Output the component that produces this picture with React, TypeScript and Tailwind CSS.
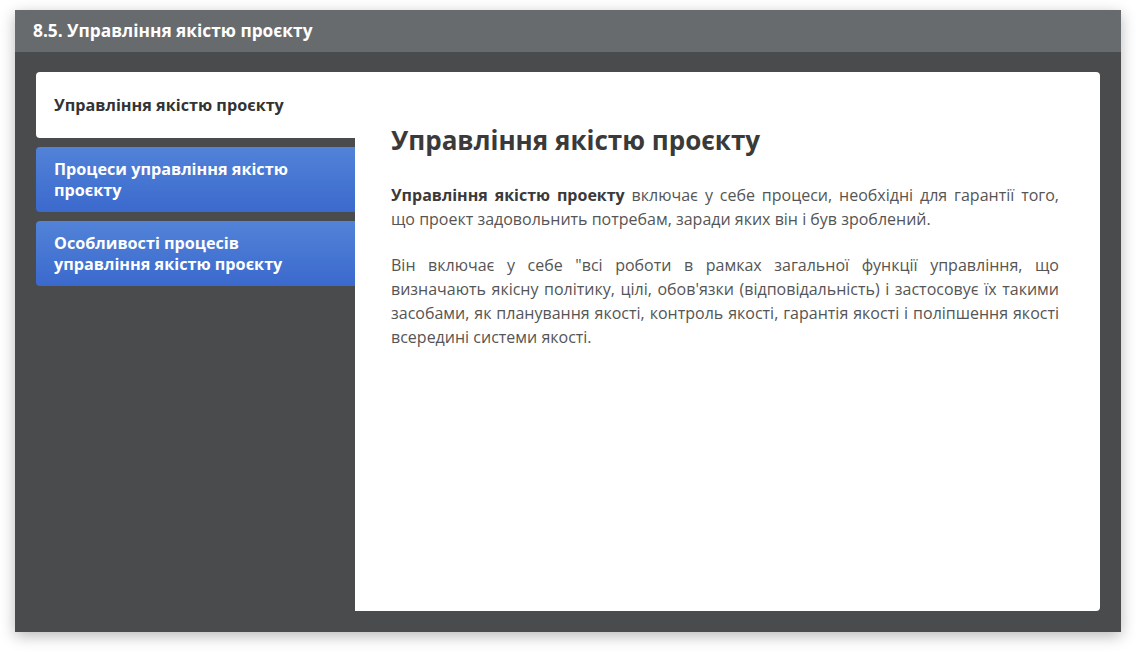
const tabs = [
  "Управління якістю проєкту",
  "Процеси управління якістю проєкту",
  "Особливості процесів управління якістю проєкту",
];

export default function App() {
  const active = 0;
  return (
    <div className="w-[1136px] h-[653px] bg-white pt-[10px] pl-[15px]" style={{ fontFamily: '"Open Sans", "Noto Sans", sans-serif' }}>
      <div className="w-[1106px] h-[622px] flex flex-col bg-[#4a4b4d] shadow-[0_4px_14px_rgba(0,0,0,0.28)]">
        {/* header */}
        <div className="h-[42px] shrink-0 bg-[#686b6e] flex items-center pl-[18px]">
          <h1 className="text-white font-bold text-[17.3px] leading-none">8.5. Управління якістю проєкту</h1>
        </div>

        {/* body */}
        <div className="flex-1 flex pt-[20px] pb-[21px] pl-[21px] pr-[21px]">
          <div className="w-[319px] shrink-0 flex flex-col gap-[9px]">
            {tabs.map((t, i) => (
              <div
                key={t}
                className={
                  i === active
                    ? "h-[66px] flex items-center pl-[18px] pr-[40px] pt-[1px] rounded-l-[4px] bg-white text-[#333] font-bold text-[16.2px] leading-[21px]"
                    : "h-[65px] flex items-center pl-[18px] pr-[40px] pt-[1px] rounded-l-[4px] bg-gradient-to-b from-[#5283d8] to-[#3b69cd] text-white font-bold text-[16.2px] leading-[21px]"
                }
              >
                {t}
              </div>
            ))}
          </div>

          <div className="flex-1 bg-white rounded-r-[4px] pt-[52px] pl-[36px] pr-[41px]">
            <h2 className="text-[26px] leading-[32px] font-bold text-[#3a3a3a] mb-[27px]">Управління якістю проєкту</h2>
            <p className="text-[16px] leading-[24px] text-[#555] text-justify mb-[22px]">
              <b className="text-[#3a3a3a]">Управління якістю проекту</b> включає у себе процеси, необхідні для гарантії того, що проект задовольнить потребам, заради яких він і був зроблений.
            </p>
            <p className="text-[16px] leading-[24px] text-[#555] text-justify">
              Він включає у себе "всі роботи в рамках загальної функції управління, що визначають якісну політику, цілі, обов'язки (відповідальність) і застосовує їх такими засобами, як планування якості, контроль якості, гарантія якості і поліпшення якості всередині системи якості.
            </p>
          </div>
        </div>
      </div>
    </div>
  );
}
